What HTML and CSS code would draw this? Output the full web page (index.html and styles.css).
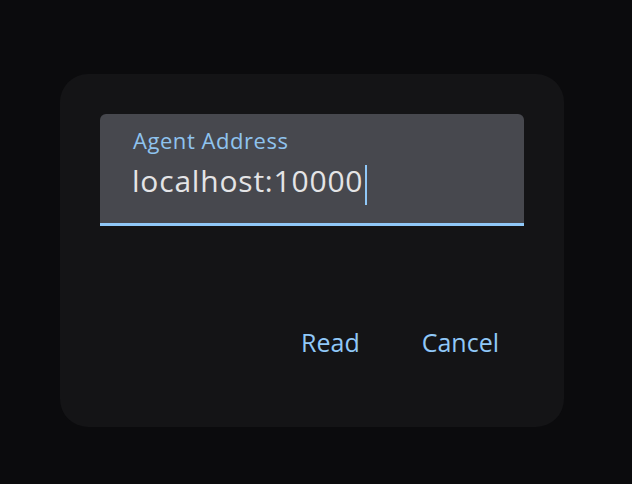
FILE: index.html
```html
<!DOCTYPE html>
<html>
<head>
<meta charset="utf-8">
<link rel="stylesheet" href="styles.css">
</head>
<body>
<div class="dialog">
  <div class="field">
    <div class="label">Agent Address</div>
    <div class="value">localhost:10000<span class="caret"></span></div>
  </div>
  <div class="actions">
    <span class="btn">Read</span>
    <span class="btn">Cancel</span>
  </div>
</div>
</body>
</html>
```
FILE: styles.css
```css
html, body {
  margin: 0;
  padding: 0;
  background: #0b0b0d;
  font-family: "Open Sans", "Noto Sans", sans-serif;
}
body {
  width: 632px;
  height: 484px;
  overflow: hidden;
}
.dialog {
  box-sizing: border-box;
  margin: 74px 0 0 60px;
  width: 504px;
  height: 353px;
  background: #141416;
  border-radius: 28px;
  padding: 40px;
}
.field {
  box-sizing: border-box;
  height: 112px;
  background: #47484e;
  border-radius: 6px 6px 0 0;
  border-bottom: 3px solid #90c8f8;
  padding: 12px 32px 0 33px;
}
.label {
  color: #8fc3ee;
  font-size: 22px;
  line-height: 28px;
  letter-spacing: 0.55px;
}
.value {
  color: #e4e4e6;
  font-size: 30px;
  line-height: 40px;
  letter-spacing: 0.8px;
  margin-top: 7px;
  margin-left: -1px;
  display: flex;
  align-items: flex-start;
}
.caret {
  display: inline-block;
  width: 2px;
  height: 40px;
  background: #90c8f8;
  margin-top: 4px;
  margin-left: 2px;
}
.actions {
  display: flex;
  justify-content: flex-end;
  gap: 62px;
  margin-top: 100px;
  padding-right: 25px;
}
.btn {
  color: #90c8f8;
  font-size: 25px;
  line-height: 32px;
}
```
